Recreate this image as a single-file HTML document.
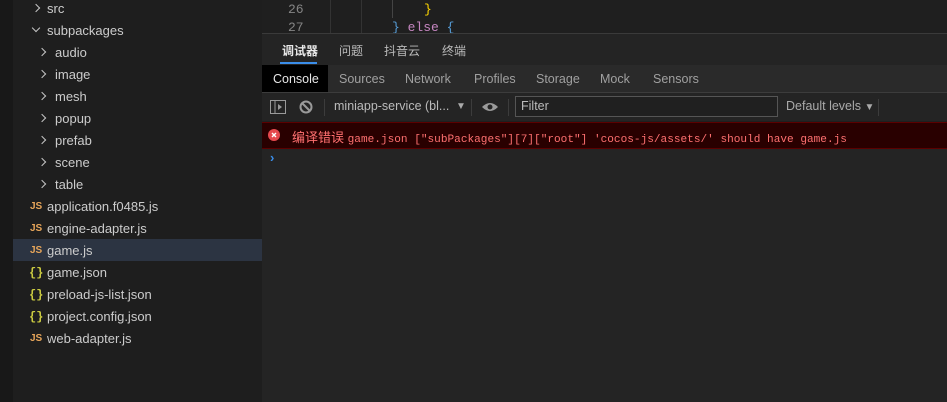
<!DOCTYPE html>
<html><head><meta charset="utf-8"><style>
*{margin:0;padding:0;box-sizing:border-box}
body{width:947px;height:402px;overflow:hidden;background:#1e1e1e;font-family:"Segoe UI","Liberation Sans","Noto Sans CJK SC",sans-serif;font-size:13px;color:#cccccc;position:relative}
.abs{position:absolute}
.strip{left:0;top:0;width:13px;height:402px;background:#181818}
.side{left:13px;top:0;width:249px;height:402px;background:#1e1e1e}
.row{position:absolute;left:13px;width:249px;height:22px;line-height:22px;color:#cccccc;font-size:13px}
.row.sel{background:#2c3442}
.chev{position:absolute;top:7px;width:6px;height:6px;border-right:1.3px solid #c5c5c5;border-bottom:1.3px solid #c5c5c5;transform:rotate(-45deg)}
.chev.d{transform:rotate(45deg);top:5px}
.js{position:absolute;left:17px;font-size:10px;font-weight:bold;color:#e8a65a;font-family:"Liberation Sans",sans-serif}
.br{position:absolute;left:16px;font-size:12px;font-weight:bold;color:#cbcb41;font-family:"Liberation Mono",monospace}
.code{left:262px;top:0;width:685px;height:33px;background:#1f1f1f;font-family:"Liberation Mono",monospace;font-size:13px;overflow:hidden}
.tabs{left:262px;top:33px;width:685px;height:32px;background:#242424;border-top:1px solid #3a3a3a}
.tabs span{position:absolute;top:8px;font-size:12px;color:#bbb}
.dt{left:262px;top:65px;width:685px;height:28px;background:#2a2a2a;border-bottom:1px solid #3c3c3c}
.dt span{position:absolute;top:7px;font-size:12.5px;color:#a0a0a0}
.tb{left:262px;top:93px;width:685px;height:28px;background:#242424}
.err{left:262px;top:122px;width:685px;height:27px;background:#290000;border-top:1px solid #5c0000;border-bottom:1px solid #5c0000}
.rest{left:262px;top:149px;width:685px;height:253px;background:#242424}
</style></head><body>
<div class="abs strip"></div>
<div class="abs side"></div>
<div class="row" style="top:-2px"><i class="chev" style="left:20px"></i><span style="position:absolute;left:34px">src</span></div>
<div class="row" style="top:20px"><i class="chev d" style="left:20px"></i><span style="position:absolute;left:34px">subpackages</span></div>
<div class="row" style="top:42px"><i class="chev" style="left:26px"></i><span style="position:absolute;left:42px">audio</span></div>
<div class="row" style="top:64px"><i class="chev" style="left:26px"></i><span style="position:absolute;left:42px">image</span></div>
<div class="row" style="top:86px"><i class="chev" style="left:26px"></i><span style="position:absolute;left:42px">mesh</span></div>
<div class="row" style="top:108px"><i class="chev" style="left:26px"></i><span style="position:absolute;left:42px">popup</span></div>
<div class="row" style="top:130px"><i class="chev" style="left:26px"></i><span style="position:absolute;left:42px">prefab</span></div>
<div class="row" style="top:152px"><i class="chev" style="left:26px"></i><span style="position:absolute;left:42px">scene</span></div>
<div class="row" style="top:174px"><i class="chev" style="left:26px"></i><span style="position:absolute;left:42px">table</span></div>
<div class="row" style="top:196px"><b class="js">JS</b><span style="position:absolute;left:34px">application.f0485.js</span></div>
<div class="row" style="top:218px"><b class="js">JS</b><span style="position:absolute;left:34px">engine-adapter.js</span></div>
<div class="row sel" style="top:239px;height:22px"><b class="js" style="top:1px">JS</b><span style="position:absolute;left:34px;top:1px">game.js</span></div>
<div class="row" style="top:262px"><b class="br">{}</b><span style="position:absolute;left:34px">game.json</span></div>
<div class="row" style="top:284px"><b class="br">{}</b><span style="position:absolute;left:34px">preload-js-list.json</span></div>
<div class="row" style="top:306px"><b class="br">{}</b><span style="position:absolute;left:34px">project.config.json</span></div>
<div class="row" style="top:328px"><b class="js">JS</b><span style="position:absolute;left:34px">web-adapter.js</span></div>

<div class="abs code">
<span class="abs" style="left:26px;top:2px;color:#858585">26</span>
<span class="abs" style="left:26px;top:20px;color:#858585">27</span>
<div class="abs" style="left:68px;top:0;width:1px;height:33px;background:#333"></div>
<div class="abs" style="left:99px;top:0;width:1px;height:33px;background:#333"></div>
<div class="abs" style="left:130px;top:0;width:1px;height:18px;background:#444"></div>
<span class="abs" style="left:162px;top:2px;color:#ffd700">}</span>
<span class="abs" style="left:130px;top:20px;color:#569cd6">} <span style="color:#c586c0">else</span> {</span>
</div>
<div class="abs tabs">
<span style="left:20px;color:#e8e8e8;font-weight:bold">调试器</span>
<div class="abs" style="left:18px;top:28px;width:37px;height:2px;background:#3b8eea"></div>
<span style="left:77px">问题</span>
<span style="left:122px">抖音云</span>
<span style="left:180px">终端</span>
</div>
<div class="abs dt">
<div class="abs" style="left:0;top:0;width:66px;height:27px;background:#000"></div>
<span style="left:11px;color:#e8e8e8">Console</span>
<span style="left:77px">Sources</span>
<span style="left:143px">Network</span>
<span style="left:212px">Profiles</span>
<span style="left:274px">Storage</span>
<span style="left:338px">Mock</span>
<span style="left:391px">Sensors</span>
</div>
<div class="abs tb">
<svg class="abs" style="left:8px;top:7px" width="16" height="14"><rect x="0.5" y="0.5" width="15" height="13" fill="none" stroke="#9a9a9a"/><line x1="5" y1="1" x2="5" y2="13" stroke="#9a9a9a"/><path d="M8 4 L12 7 L8 10Z" fill="#9a9a9a"/></svg>
<svg class="abs" style="left:37px;top:7px" width="14" height="14"><circle cx="7" cy="7" r="5.5" fill="none" stroke="#9a9a9a" stroke-width="2"/><line x1="3" y1="3" x2="11" y2="11" stroke="#9a9a9a" stroke-width="2"/></svg>
<div class="abs" style="left:62px;top:6px;width:1px;height:17px;background:#3c3c3c"></div>
<span class="abs" style="left:72px;top:6px;font-size:12.5px;color:#bbb">miniapp-service (bl...</span>
<span class="abs" style="left:194px;top:8px;font-size:10px;color:#aaa">▼</span>
<div class="abs" style="left:209px;top:6px;width:1px;height:17px;background:#3c3c3c"></div>
<svg class="abs" style="left:219px;top:8px" width="18" height="12"><path d="M1 6 Q9 -2 17 6 Q9 14 1 6Z" fill="#9a9a9a"/><circle cx="9" cy="6" r="2.5" fill="#242424"/></svg>
<div class="abs" style="left:246px;top:6px;width:1px;height:17px;background:#3c3c3c"></div>
<div class="abs" style="left:253px;top:3px;width:263px;height:21px;background:#202020;border:1px solid #555"></div>
<span class="abs" style="left:259px;top:6px;font-size:12.5px;color:#bbb">Filter</span>
<span class="abs" style="left:524px;top:6px;font-size:12.5px;color:#aaa">Default levels <span style="font-size:10px">▼</span></span>
<div class="abs" style="left:616px;top:6px;width:1px;height:17px;background:#3c3c3c"></div>
</div>
<div class="abs err">
<svg class="abs" style="left:6px;top:6px" width="12" height="12"><circle cx="6" cy="6" r="6" fill="#e5484d"/><path d="M4 4L8 8M8 4L4 8" stroke="#fff" stroke-width="1.4"/></svg>
<span class="abs" style="left:30px;top:4px;font-size:13px;color:#ff7070;white-space:pre"><span style="font-family:'Liberation Sans','Noto Sans CJK SC',sans-serif">编译错误</span> <span style="font-family:'Liberation Mono',monospace;font-size:11.1px">game.json ["subPackages"][7]["root"] 'cocos-js/assets/' should have game.js</span></span>
</div>
<div class="abs rest">
<span class="abs" style="left:8px;top:1px;color:#3b8eea;font-size:13px;font-weight:bold">›</span>
</div>
</body></html>
